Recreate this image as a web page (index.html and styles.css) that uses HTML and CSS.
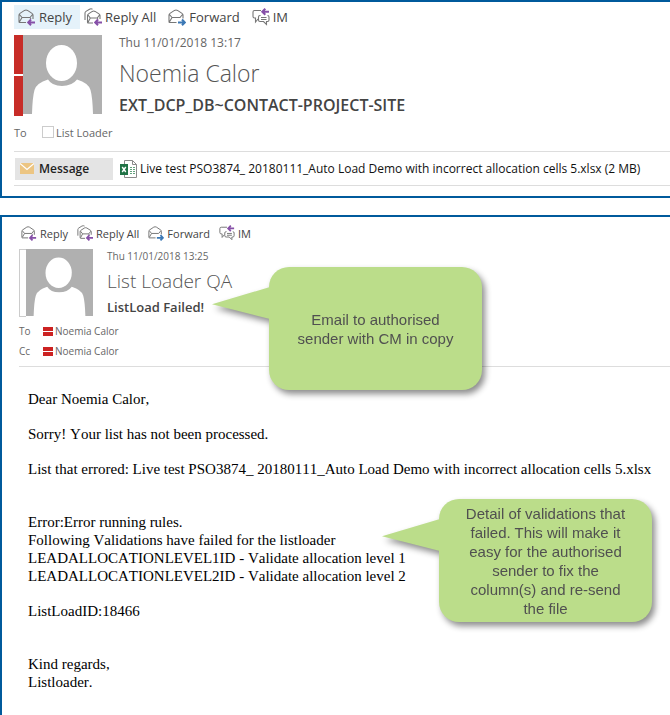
FILE: index.html
```
<!DOCTYPE html>
<html lang="en">

<head>
    <meta charset="utf-8">
    <title>List Loader mail</title>
    <link rel="stylesheet" href="styles.css">
</head>

<body>
    <!-- icons shared by both toolbars -->
    <svg class="sprite" aria-hidden="true">
        <symbol id="reply" viewBox="0 0 18 18">
            <path class="line" d="M8 14.5H1.500Q1 14.500 1 13.500V7Q1 6 2 5.400L6.500 2.400Q8 1.600 9.500 2.400L14 5.400Q15 6 15 7V11M1.500 6.500L4 9.500H12L14.500 6.500M1.400 14L4 9.500M12 9.500L13 11"/>
            <path class="arrow purple" d="M17 14.500H10.500M13 11.500L10.200 14.500L13 17.300"/>
        </symbol>
        <symbol id="replyAll" viewBox="0 0 18 18">
            <path class="line" d="M1 12V5Q1 4 2 3.400L5.500 1.200Q7 .400 8.500 1.200"/>
            <path class="line" d="M9 15H4Q3.500 15 3.500 14V7.500Q3.500 6.500 4.500 5.900L8.300 3.400Q9.700 2.600 11.100 3.400L15 5.900Q16 6.500 16 7.500V11M4 7L6.300 10H13.200L15.500 7M3.900 14.500L6.300 10M13.200 10L14 11.500"/>
            <path class="arrow purple" d="M18 14.500H11.500M14 11.500L11.200 14.500L14 17.300"/>
        </symbol>
        <symbol id="forward" viewBox="0 0 18 18">
            <path class="line" d="M8.500 14.5H1.500Q1 14.500 1 13.500V7Q1 6 2 5.400L6.500 2.400Q8 1.600 9.500 2.400L14 5.400Q15 6 15 7V10.500M1.500 6.500L4 9.500H12L14.500 6.500M1.400 14L4 9.500"/>
            <path class="arrow blue" d="M10 14.500H16.500M14 11.500L16.800 14.500L14 17.300"/>
        </symbol>
        <symbol id="im" viewBox="0 0 18 18">
            <path class="line" d="M9 2.500H2.500Q1 2.500 1 4V8.500Q1 10 2.500 10H3.500V14L6 11"/>
            <path class="line" d="M15.500 7.500Q17 7.500 17 9V12Q17 13.500 15.500 13.500H14.500V16.500L11.500 13.500H8Q6.500 13.500 6.500 12V9Q6.500 7.500 8 7.500H8.500M9 9.500H14.500M9 11.500H14.500"/>
            <path class="arrow purple" d="M17 3.800H10.500M13.300 .800L10.300 3.800L13.300 6.800"/>
        </symbol>
        <symbol id="person" viewBox="0 0 79 79">
            <path fill="#b0b0b0" d="M0 0H79V79H0Z"/>
            <path fill="#fff" d="M9 79Q9.500 62 11.500 55Q13.500 48 25 44.500Q29 51 39 51Q49 51 54 44.500Q65.500 48 67.500 55Q69.500 62 70 79Z"/>
            <ellipse cx="38.500" cy="28" rx="17" ry="19" fill="#b0b0b0"/>
            <ellipse cx="38.500" cy="28" rx="15.500" ry="18" fill="#fff"/>
        </symbol>
    </svg>

    <section class="mail">
        <div class="toolbar">
            <button class="action active"><svg class="icon"><use href="#reply"/></svg>Reply</button>
            <button class="action"><svg class="icon"><use href="#replyAll"/></svg>Reply All</button>
            <button class="action"><svg class="icon"><use href="#forward"/></svg>Forward</button>
            <button class="action"><svg class="icon"><use href="#im"/></svg>IM</button>
        </div>
        <div class="header">
            <div class="photo">
                <div class="presence busy"></div>
                <svg class="avatar"><use href="#person"/></svg>
            </div>
            <div class="info">
                <div class="date">Thu 11/01/2018 13:17</div>
                <h1 class="sender">Noemia Calor</h1>
                <h2 class="subject">EXT_DCP_DB~CONTACT-PROJECT-SITE</h2>
            </div>
        </div>
        <div class="people">
            <span class="field">To</span>
            <input type="checkbox" class="tick" id="loader">
            <label for="loader">List Loader</label>
        </div>
        <div class="attachments">
            <button class="message">
                <svg class="envelope" viewBox="0 0 14 11"><path fill="#ecc582" d="M0 0H14V11H0Z"/><path fill="none" stroke="#fff" stroke-width="1.200" d="M0 .5L7 6.500L14 .5"/></svg>
                Message
            </button>
            <a class="file" href="#">
                <svg class="excel" viewBox="0 0 18 18">
                    <path fill="#fff" stroke="#8a8a8a" d="M4.500 .5H12.500L16.500 4.500V17.500H4.500Z"/>
                    <path fill="none" stroke="#8a8a8a" d="M12.500 .5V4.500H16.500"/>
                    <path fill="none" stroke="#63a27d" stroke-dasharray="2 1" d="M10 7.500H15.500M10 9.500H15.500M10 11.500H15.500M10 13.500H15.500"/>
                    <path fill="#217346" d="M0 4H8V15H0Z"/>
                    <path stroke="#fff" stroke-width="1.400" d="M2.200 7L5.800 12M5.800 7L2.200 12"/>
                </svg>
                Live test PSO3874_ 20180111_Auto Load Demo with incorrect allocation cells 5.xlsx (2 MB)
            </a>
        </div>
    </section>

    <section class="mail small">
        <div class="toolbar">
            <button class="action"><svg class="icon"><use href="#reply"/></svg>Reply</button>
            <button class="action"><svg class="icon"><use href="#replyAll"/></svg>Reply All</button>
            <button class="action"><svg class="icon"><use href="#forward"/></svg>Forward</button>
            <button class="action"><svg class="icon"><use href="#im"/></svg>IM</button>
        </div>
        <div class="header">
            <div class="photo">
                <div class="presence"></div>
                <svg class="avatar"><use href="#person"/></svg>
            </div>
            <div class="info">
                <div class="date">Thu 11/01/2018 13:25</div>
                <h1 class="sender">List Loader QA</h1>
                <h2 class="subject">ListLoad Failed!</h2>
            </div>
        </div>
        <div class="people">
            <span class="field">To</span><span class="status"></span><span>Noemia Calor</span>
        </div>
        <div class="people">
            <span class="field">Cc</span><span class="status"></span><span>Noemia Calor</span>
        </div>
        <div class="body">
            <p>Dear Noemia Calor,</p>
            <p>Sorry! Your list has not been processed.</p>
            <p>List that errored: Live test PSO3874_ 20180111_Auto Load Demo with incorrect allocation cells 5.xlsx</p>
            <p class="block">Error:Error running rules.<br>
                Following Validations have failed for the listloader<br>
                LEADALLOCATIONLEVEL1ID - Validate allocation level 1<br>
                LEADALLOCATIONLEVEL2ID - Validate allocation level 2</p>
            <p>ListLoadID:18466</p>
            <p class="block">Kind regards,<br>
                Listloader.</p>
        </div>
        <div class="callout copy">Email to authorised sender with CM in copy</div>
        <div class="callout detail">Detail of validations that failed. This will make it easy for the authorised sender to fix the column(s) and re-send the file</div>
    </section>
</body>

</html>
```
FILE: styles.css
```
* {
    box-sizing: border-box;
}

body {
    margin: 0;
    min-height: 100vh;
    display: flex;
    flex-direction: column;
    gap: 17px;
    background-color: #fff;
    font-family: "Open Sans", "Noto Sans", sans-serif;
    font-size: 12px;
    color: #555;
}

.sprite {
    position: absolute;
    width: 0;
    height: 0;
}

.line {
    fill: none;
    stroke: #777;
    stroke-width: 1.1;
}

.arrow {
    fill: none;
    stroke-width: 2;
}

.purple {
    stroke: #8650a8;
}

.blue {
    stroke: #3b78b5;
}

.mail {
    position: relative;
    border: 2px solid #005a9c;
    border-right: none;
    padding: 3px 0 10px 12px;
}

.toolbar {
    display: flex;
}

.action {
    display: flex;
    align-items: center;
    gap: 3px;
    height: 24px;
    padding: 0 8px 0 4px;
    border: none;
    background: none;
    font-family: inherit;
    font-size: 13px;
    color: #444;
    white-space: nowrap;
}

.action.active {
    background-color: #e5f2fa;
}

.icon {
    width: 18px;
    height: 18px;
}

.header {
    display: flex;
    gap: 17px;
    margin-top: 6px;
}

.photo {
    display: flex;
}

.presence {
    width: 9px;
    background-color: #fff;
}

.presence.busy {
    background: linear-gradient(#c72c27 39px, #fff 39px, #fff 41px, #c72c27 41px);
}

.avatar {
    width: 79px;
    height: 79px;
}

.date {
    line-height: 16px;
    color: #666;
}

.sender {
    margin: 6px 0 0;
    font-size: 23px;
    line-height: 32px;
    font-weight: 300;
    color: #555;
}

.subject {
    margin: 5px 0 0;
    font-size: 16px;
    line-height: 22px;
    font-weight: 600;
    color: #444;
}

.people {
    display: flex;
    align-items: center;
    height: 20px;
    font-size: 11px;
    color: #666;
}

.mail:not(.small) .people {
    margin-top: 6px;
}

.field {
    width: 28px;
}

.tick {
    appearance: none;
    width: 12px;
    height: 12px;
    margin: 0 2px 0 0;
    border: 1px solid #ccc;
}

.attachments {
    display: flex;
    align-items: center;
    gap: 7px;
    height: 35px;
    margin-top: 9px;
    border-top: 1px solid #ddd;
    border-bottom: 1px solid #ddd;
    white-space: nowrap;
}

.message {
    display: flex;
    align-items: center;
    gap: 5px;
    width: 98px;
    height: 22px;
    margin-left: 1px;
    padding: 0 5px;
    border: none;
    background-color: #e4e4e4;
    font-family: inherit;
    font-size: 12px;
    font-weight: 600;
    color: #222;
}

.envelope {
    width: 14px;
    height: 11px;
}

.file {
    display: flex;
    align-items: center;
    gap: 2px;
    color: #111;
    text-decoration: none;
}

.excel {
    width: 18px;
    height: 18px;
}

/* second mail is a bit smaller */
.small {
    flex: 1;
    padding: 4px 0 20px 17px;
}

.small .toolbar {
    gap: 2px;
}

.small .action {
    font-size: 11px;
    padding: 0 5px 0 2px;
}

.small .icon {
    width: 16px;
    height: 16px;
}

.small .header {
    gap: 14px;
    margin: 4px 0;
}

.small .presence {
    width: 7px;
    border: 1px solid #ccc;
    border-right: none;
}

.small .avatar {
    width: 67px;
    height: 67px;
}

.small .date {
    font-size: 10px;
    line-height: 14px;
}

.small .sender {
    margin-top: 4px;
    font-size: 19px;
    line-height: 28px;
}

.small .subject {
    margin-top: 2px;
    font-size: 13px;
    line-height: 20px;
}

.small .people {
    font-size: 10px;
}

.small .field {
    width: 24px;
}

.status {
    width: 10px;
    height: 9px;
    margin-right: 2px;
    background: linear-gradient(#cc2222 4px, #fff 4px, #fff 5px, #cc2222 5px);
}

.body {
    margin-top: 5px;
    padding: 23px 0 0 9px;
    border-top: 1px solid #ddd;
    font-family: "Liberation Serif", "Times New Roman", serif;
    font-size: 15px;
    line-height: 18px;
    font-kerning: none;
    color: #000;
}

.body p {
    margin: 0 0 17px;
}

.body .block {
    margin-top: 35px;
}

.callout {
    position: absolute;
    display: flex;
    align-items: center;
    width: 213px;
    height: 123px;
    padding: 0 22px;
    border-radius: 20px;
    background-color: #bbdd8a;
    filter: drop-shadow(3px 4px 3px rgba(0, 0, 0, 0.45));
    font-family: "Liberation Sans", Arial, sans-serif;
    font-size: 15px;
    line-height: 19px;
    text-align: center;
    color: #505050;
}

.callout::before {
    content: "";
    position: absolute;
    top: 20px;
    left: -57px;
    width: 58px;
    height: 32px;
    background-color: #bbdd8a;
    clip-path: polygon(0 54%, 100% 0, 100% 100%);
}

.copy {
    top: 50px;
    left: 267px;
}

.detail {
    top: 282px;
    left: 437px;
}
```
